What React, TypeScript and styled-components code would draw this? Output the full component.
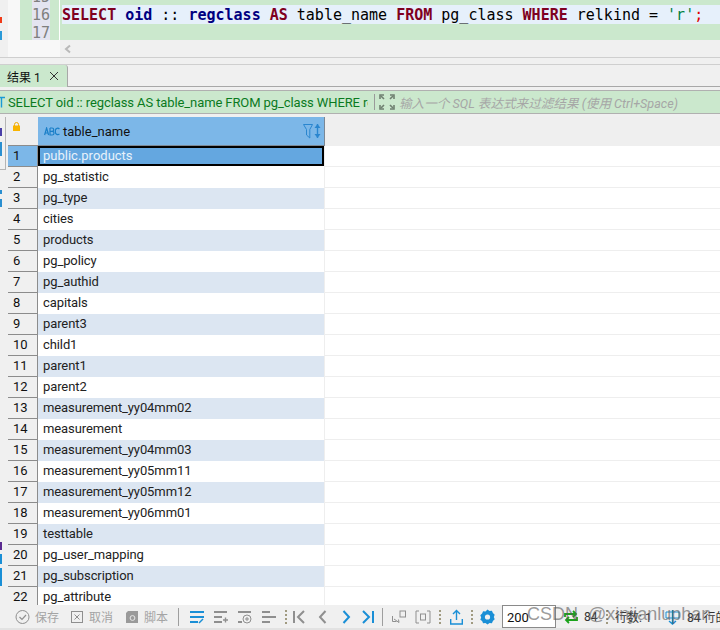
import React from "react";
import styled, {createGlobalStyle} from "styled-components";

const UI_FONT = `Roboto, "Noto Sans CJK SC", sans-serif`;

const GlobalStyle = createGlobalStyle`
  html, body {
    margin: 0;
    padding: 0;
    background: #fff;
  }
  * {
    box-sizing: border-box;
  }
`;

const Page = styled.div`
  position: relative;
  width: 720px;
  height: 630px;
  overflow: hidden;
  display: flex;
  flex-direction: column;
  background: #f0f0f0;
  font-family: ${UI_FONT};
`;

const EditorRow = styled.div`
  display: flex;
  height: 40px;
  flex-shrink: 0;
`;

const SideStrip = styled.div`
  width: 8px;
  flex-shrink: 0;
  display: flex;
  flex-direction: column;
  padding-top: 17px;
  gap: 8px;
  background: #f0f0f0;
`;

const SideMark = styled.div<{$color: string, $h: number, $mt?: number}>`
  width: 2px;
  flex-shrink: 0;
  height: ${props => props.$h}px;
  margin-top: ${props => props.$mt ?? 0}px;
  background: ${props => props.$color};
`;

const SideGap = styled.div`
  width: 12px;
  flex-shrink: 0;
  background: #f8f8f8;
`;

const GreenGutter = styled.div<{$w: number}>`
  width: ${props => props.$w}px;
  flex-shrink: 0;
  background: #cbe8cd;
`;

const LineNumbers = styled.div`
  width: 18px;
  flex-shrink: 0;
  background: #e4e4f0;
  font: 15px/19px "DejaVu Sans Mono", monospace;
  color: #7f7f7f;
  text-align: right;
  overflow: hidden;
`;

const LineNo = styled.div`
  height: 19px;
  width: 17px;
  margin-top: -1px;
  &:first-child {
    margin-top: -12px;
  }
`;

const CodeArea = styled.div`
  flex: 1;
  min-width: 0;
  border-left: 1px solid #fff;
  background: #cbe8cd;
  padding: 5px 0 0 2px;
`;

const CodeLine = styled.div`
  height: 19px;
  background: #e6f0fb;
  font: 15px/20px "DejaVu Sans Mono", monospace;
  color: #000;
  white-space: pre;
`;

const Kw = styled.span`
  font-weight: 700;
  color: #7f0020;
`;

const Ident = styled.span`
  font-weight: 700;
  color: #000080;
`;

const Str = styled.span`
  color: #008040;
`;

const Semi = styled.span`
  color: #e00000;
`;

const ScrollRow = styled.div`
  height: 18px;
  flex-shrink: 0;
  border-bottom: 1px solid #cfcfcf;
  background: #f0f0f0;
  display: flex;
  align-items: center;
  padding-left: 8px;
`;

const ScrollCorner = styled.div`
  width: 52px;
  height: 100%;
  margin-right: 4px;
  background: #f8f8f8;
`;

const TabBar = styled.div`
  height: 23px;
  flex-shrink: 0;
  margin-top: 6px;
  border-top: 1px solid #cfcfcf;
  border-bottom: 1px solid #a8a8a8;
  display: flex;
`;

const Tab = styled.div`
  width: 68px;
  height: 22px;
  background: #cbe8cd;
  border-right: 1px solid #a8a8a8;
  border-top-right-radius: 3px;
  display: flex;
  align-items: center;
  gap: 8px;
  padding-left: 7px;
  font-size: 12px;
  color: #111;
`;

const SqlBar = styled.div`
  height: 24px;
  flex-shrink: 0;
  margin-top: 3px;
  border-top: 1px solid #b0b0b0;
  border-bottom: 1px solid #b0b0b0;
  background: #cbe8cd;
  display: flex;
  align-items: center;
  white-space: nowrap;
  overflow: hidden;
`;

const SqlIcon = styled.div`
  width: 8px;
  flex-shrink: 0;
  overflow: hidden;
  display: flex;
`;

const SqlQuery = styled.div`
  width: 360px;
  flex-shrink: 0;
  overflow: hidden;
  font-size: 13px;
  letter-spacing: -0.1px;
  color: #0a7a1e;
`;

const SqlDivider = styled.div`
  width: 1px;
  height: 16px;
  margin: 0 4px 0 6px;
  background: #9a9a9a;
  flex-shrink: 0;
`;

const FilterHint = styled.div`
  margin-left: 4px;
  font-size: 12.6px;
  font-style: italic;
  color: #a6a6a6;
`;

const GridWrap = styled.div`
  flex: 1;
  min-height: 0;
  display: flex;
  margin-top: 3px;
  overflow: hidden;
`;

const GridStrip = styled.div`
  width: 8px;
  flex-shrink: 0;
  display: flex;
  flex-direction: column;
  background: #f0f0f0;
`;

const StripPanel = styled.div`
  width: 6px;
  height: 53px;
  flex-shrink: 0;
  border-right: 1px solid #b4b4b4;
  border-bottom: 1px solid #b4b4b4;
  padding-top: 11px;
  display: flex;
  flex-direction: column;
  gap: 6px;
`;

const Grid = styled.div`
  flex: 1;
  min-width: 0;
  background: #fff;
  overflow: hidden;
`;

const HeaderRow = styled.div`
  display: flex;
  height: 29px;
  background: #efefef;
`;

const LockCell = styled.div`
  width: 30px;
  flex-shrink: 0;
  border-bottom: 1px solid #8c8c8c;
  padding: 5px 0 0 5px;
  svg {
    display: block;
  }
`;

const HeaderCell = styled.div`
  width: 287px;
  flex-shrink: 0;
  background: #7cb7e8;
  border-right: 1px solid #7c8894;
  border-bottom: 1px solid #7c8894;
  display: flex;
  align-items: center;
  padding: 0 2px 0 6px;
  font-size: 13px;
  color: #111;
`;

const HeaderName = styled.span`
  margin-left: 3px;
  flex: 1;
`;

const Row = styled.div`
  display: flex;
  height: 21px;
`;

const RowNo = styled.div<{$active?: boolean}>`
  width: 30px;
  flex-shrink: 0;
  background: ${props => props.$active ? "#7cb7e8" : "#f0f0f0"};
  border-bottom: 1px solid #8c8c8c;
  border-right: 1px solid #8c8c8c;
  padding-left: 5px;
  font-size: 13px;
  line-height: 19px;
  color: #111;
`;

const Cell = styled.div<{$alt?: boolean, $active?: boolean}>`
  width: 286px;
  flex-shrink: 0;
  padding-left: 5px;
  font-size: 13px;
  line-height: 19px;
  letter-spacing: -0.1px;
  color: #222;
  background: ${props => props.$active ? "#64a7e0" : props.$alt ? "#dce6f2" : "#fff"};
  ${props => props.$active ? `
    border: 2px solid #000;
    padding-left: 3px;
    line-height: 15px;
    height: 20px;
    letter-spacing: 0;
    color: #e8f2fb;
  ` : ""}
`;

const Filler = styled.div`
  flex: 1;
  border-bottom: 1px solid #eeeeee;
  background: #fff;
`;

const CellEdge = styled.div`
  width: 1px;
  flex-shrink: 0;
  background: #eeeeee;
`;

const Toolbar = styled.div`
  height: 25px;
  flex-shrink: 0;
  background: #f0f0f0;
  border-bottom: 2px solid #e2e2e2;
  display: flex;
  align-items: center;
  padding-left: 15px;
  font-size: 12px;
  white-space: nowrap;
  overflow: hidden;
  position: relative;
`;

const ToolLabel = styled.span<{$ml: number}>`
  color: #a4a4a4;
  margin-left: ${props => props.$ml}px;
  width: 24px;
  flex-shrink: 0;
`;

const ToolSep = styled.div<{$ml: number}>`
  width: 1px;
  height: 18px;
  flex-shrink: 0;
  background: #9e9e9e;
  margin-left: ${props => props.$ml}px;
`;

const IconSlot = styled.div<{$ml?: number}>`
  flex-shrink: 0;
  margin-left: ${props => props.$ml ?? 0}px;
  display: flex;
  align-items: center;
`;

const Dots = styled.div<{$ml: number}>`
  width: 2px;
  height: 14px;
  flex-shrink: 0;
  background: repeating-linear-gradient(to bottom, #a09a80 0 2px, transparent 2px 4px);
  margin-left: ${props => props.$ml}px;
`;

const FetchInput = styled.div`
  width: 54px;
  height: 23px;
  flex-shrink: 0;
  margin-left: 7px;
  background: #fff;
  border: 1px solid #8a8a8a;
  font-size: 13px;
  line-height: 23px;
  padding-left: 4px;
  color: #111;
`;

const StatusText = styled.span<{$ml: number, $w: number}>`
  flex-shrink: 0;
  width: ${props => props.$w}px;
  margin-left: ${props => props.$ml}px;
  font-size: 12px;
  color: #333;
`;

const Watermark = styled.div`
  position: absolute;
  left: 527px;
  top: 604px;
  font: 18px/20px "Liberation Sans", sans-serif;
  color: rgba(90, 90, 90, 0.62);
  white-space: pre;
`;

const rows = [
    "public.products", "pg_statistic", "pg_type", "cities", "products", "pg_policy",
    "pg_authid", "capitals", "parent3", "child1", "parent1", "parent2",
    "measurement_yy04mm02", "measurement", "measurement_yy04mm03", "measurement_yy05mm11",
    "measurement_yy05mm12", "measurement_yy06mm01", "testtable", "pg_user_mapping",
    "pg_subscription", "pg_attribute",
];

const GREY = "#8f8f8f";
const BLUE = "#1a8fd6";

const Svg: React.FC<{w: number, h?: number, children: React.ReactNode}> = ({w, h = 16, children}) => (
    <svg width={w} height={h} viewBox={`0 0 ${w} ${h}`} fill="none">{children}</svg>
);

const lines = (rowsY: number[], x2: number[], color: string) => (
    <>
        {rowsY.map((y, i) => <path key={y} d={`M1 ${y}H${x2[i]}`} stroke={color} strokeWidth="2"/>)}
    </>
);

const App: React.FC = () => (
    <Page>
        <GlobalStyle/>
        <EditorRow>
            <SideStrip>
                <SideMark $color="#f03a17" $h={6}/>
                <SideMark $color="#2a9ad8" $h={9}/>
            </SideStrip>
            <SideGap/>
            <GreenGutter $w={12}/>
            <LineNumbers>
                <LineNo>15</LineNo>
                <LineNo>16</LineNo>
                <LineNo>17</LineNo>
            </LineNumbers>
            <GreenGutter $w={9}/>
            <CodeArea>
                <CodeLine>
                    <Kw>SELECT</Kw> <Ident>oid</Ident> :: <Ident>regclass</Ident> <Kw>AS</Kw> table_name <Kw>FROM</Kw> pg_class <Kw>WHERE</Kw> relkind = <Str>'r'</Str><Semi>;</Semi>
                </CodeLine>
            </CodeArea>
        </EditorRow>
        <ScrollRow>
            <ScrollCorner/>
            <svg width="8" height="10" viewBox="0 0 8 10" fill="none">
                <path d="M6 1.5L2 5l4 3.5" stroke="#b9b9b9" strokeWidth="2"/>
            </svg>
        </ScrollRow>
        <TabBar>
            <Tab>
                结果 1
                <svg width="10" height="10" viewBox="0 0 10 10" fill="none">
                    <path d="M1 1l8 8M9 1L1 9" stroke="#333" strokeWidth="1"/>
                </svg>
            </Tab>
        </TabBar>
        <SqlBar>
            <SqlIcon>
                <svg width="5" height="12" viewBox="0 0 5 12" fill="none">
                    <path d="M-2 1.5H5M1.5 1.5V11.5" stroke="#1a9ad6" strokeWidth="1.4"/>
                </svg>
            </SqlIcon>
            <SqlQuery>
                SELECT oid :: regclass AS table_name FROM pg_class WHERE relkind
            </SqlQuery>
            <SqlDivider/>
            <svg width="16" height="16" viewBox="0 0 16 16" fill="none">
                <path d="M1 5V1h4M11 1h4v4M1 11v4h4M15 11v4h-4" stroke="#6f7f70" strokeWidth="1.6"/>
                <path d="M2 2l3 3M14 2l-3 3M2 14l3-3M14 14l-3-3" stroke="#6f7f70" strokeWidth="1.6"/>
            </svg>
            <FilterHint>输入一个 SQL 表达式来过滤结果 (使用 Ctrl+Space)</FilterHint>
        </SqlBar>
        <GridWrap>
            <GridStrip>
                <StripPanel>
                    <SideMark $color="#4a3fa8" $h={8}/>
                    <SideMark $color="#2a8fd0" $h={14}/>
                </StripPanel>
                <SideMark $color="#2a8fd0" $mt={20} $h={4}/>
                <SideMark $color="#2a8fd0" $mt={5} $h={8}/>
                <SideMark $color="#5a2a90" $mt={335} $h={8}/>
                <SideMark $color="#1a8fd6" $mt={4} $h={10}/>
                <SideMark $color="#1a8fd6" $mt={4} $h={18}/>
            </GridStrip>
            <Grid>
                <HeaderRow>
                    <LockCell>
                        <svg width="7" height="9" viewBox="0 0 7 9">
                            <path d="M1.5 4V2.5a2 2 0 0 1 4 0V4" stroke="#f0a800" fill="none"/>
                            <rect x="0" y="3.5" width="7" height="5.5" fill="#f8b400"/>
                        </svg>
                    </LockCell>
                    <HeaderCell>
                        <svg width="16" height="9" viewBox="0 0 16 9" fill="none" stroke="#1a7fc8" strokeWidth="1.2">
                            <path d="M.6 8L2.6 1l2 7M1.2 6h3"/>
                            <path d="M6 1v7h2.2a1.6 1.6 0 0 0 0-3.6H6M6 4.4h2a1.6 1.6 0 0 0 0-3.4H6"/>
                            <path d="M15.4 2a2.3 2.3 0 0 0-4 1.2v2a2.3 2.3 0 0 0 4 1.6"/>
                        </svg>
                        <HeaderName>table_name</HeaderName>
                        <svg width="19" height="17" viewBox="0 0 19 17" fill="none">
                            <path d="M.5 1.5h9L6.8 6.5v8.5L3.5 12V6.5z" stroke="#2a86cf"/>
                            <path d="M14.5 1v14" stroke="#2a86cf" strokeWidth="1.4"/>
                            <path d="M11.5 5l3-4 3 4zM11.5 11l3 4 3-4z" fill="#2a86cf"/>
                        </svg>
                    </HeaderCell>
                </HeaderRow>
                {rows.map((name, i) => (
                    <Row key={name}>
                        <RowNo $active={i === 0}>{i + 1}</RowNo>
                        <Cell $alt={i % 2 === 0} $active={i === 0}>{name}</Cell>
                        <CellEdge/>
                        <Filler/>
                    </Row>
                ))}
            </Grid>
        </GridWrap>
        <Toolbar>
            <IconSlot>
                <Svg w={15}>
                    <circle cx="7.5" cy="8" r="6.5" stroke={GREY}/>
                    <path d="M4.5 8l2.5 2.5 4-4.5" stroke={GREY} strokeWidth="1.2"/>
                </Svg>
            </IconSlot>
            <ToolLabel $ml={5}>保存</ToolLabel>
            <IconSlot $ml={12}>
                <Svg w={12} h={12}>
                    <rect x=".5" y=".5" width="11" height="11" stroke={GREY}/>
                    <path d="M3.5 3.5l5 5M8.5 3.5l-5 5" stroke={GREY}/>
                </Svg>
            </IconSlot>
            <ToolLabel $ml={6}>取消</ToolLabel>
            <IconSlot $ml={13}>
                <Svg w={13}>
                    <path d="M2 2h10v12H0V4z" fill="#9a9a9a"/>
                    <circle cx="6.5" cy="9" r="2.4" stroke="#e8e8e8"/>
                </Svg>
            </IconSlot>
            <ToolLabel $ml={5}>脚本</ToolLabel>
            <ToolSep $ml={10}/>
            <IconSlot $ml={10}>
                <Svg w={15}>
                    {lines([3, 8, 13], [15, 15, 9], BLUE)}
                    <path d="M10 14l4-4" stroke={BLUE} strokeWidth="1.5"/>
                </Svg>
            </IconSlot>
            <IconSlot $ml={9}>
                <Svg w={15}>
                    {lines([3, 8, 13], [14, 9, 9], GREY)}
                    <path d="M10 11h5M12.5 8.5v5" stroke={GREY} strokeWidth="1.4"/>
                </Svg>
            </IconSlot>
            <IconSlot $ml={9}>
                <Svg w={15}>
                    {lines([3, 13], [14, 5], GREY)}
                    <circle cx="10" cy="10" r="4" stroke={GREY}/>
                    <path d="M8 10h4M10 8v4" stroke={GREY}/>
                </Svg>
            </IconSlot>
            <IconSlot $ml={9}>
                <Svg w={15}>
                    {lines([3, 8, 13], [9, 15, 9], GREY)}
                </Svg>
            </IconSlot>
            <Dots $ml={9}/>
            <IconSlot $ml={6}>
                <Svg w={12}>
                    <path d="M1 2v12" stroke={GREY} strokeWidth="2"/>
                    <path d="M11 2L5 8l6 6" stroke={GREY} strokeWidth="2"/>
                </Svg>
            </IconSlot>
            <IconSlot $ml={13}>
                <Svg w={9}>
                    <path d="M7.5 2L2 8l5.5 6" stroke={GREY} strokeWidth="2"/>
                </Svg>
            </IconSlot>
            <IconSlot $ml={15}>
                <Svg w={9}>
                    <path d="M1.5 2L7 8l-5.5 6" stroke={BLUE} strokeWidth="2"/>
                </Svg>
            </IconSlot>
            <IconSlot $ml={11}>
                <Svg w={12}>
                    <path d="M1 2l6 6-6 6" stroke={BLUE} strokeWidth="2"/>
                    <path d="M11 2v12" stroke={BLUE} strokeWidth="2"/>
                </Svg>
            </IconSlot>
            <ToolSep $ml={8}/>
            <IconSlot $ml={9}>
                <Svg w={14}>
                    <path d="M.5 7v5.5h4M2 10l5 3.5-.5-3" stroke={GREY}/>
                    <rect x="8" y="2" width="5.5" height="6" stroke={GREY}/>
                </Svg>
            </IconSlot>
            <IconSlot $ml={9}>
                <Svg w={16}>
                    <path d="M4 2H1v12h3M12 2h3v12h-3" stroke={GREY}/>
                    <rect x="5.5" y="5" width="5" height="6" stroke={GREY}/>
                </Svg>
            </IconSlot>
            <Dots $ml={8}/>
            <IconSlot $ml={9}>
                <Svg w={13}>
                    <path d="M6.5 11V2M3 5l3.5-3.5L10 5" stroke={BLUE} strokeWidth="1.4"/>
                    <path d="M.7 10v5h11.6v-5" stroke={BLUE} strokeWidth="1.4"/>
                </Svg>
            </IconSlot>
            <Dots $ml={8}/>
            <IconSlot $ml={7}>
                <Svg w={15}>
                    <path d="M7.5 .5l2 1.5 2.4-.3 1 2.4 1.8 1.6-.9 2.3.9 2.3-1.8 1.6-1 2.4-2.4-.3-2 1.5-2-1.5-2.4.3-1-2.4L.3 10.8l.9-2.3-.9-2.3 1.8-1.6 1-2.4 2.4.3z" fill={BLUE}/>
                    <circle cx="7.5" cy="8" r="2.6" fill="#f0f0f0"/>
                </Svg>
            </IconSlot>
            <FetchInput>200</FetchInput>
            <IconSlot $ml={7}>
                <Svg w={16}>
                    <path d="M2 8V5h10M10 2l3 3-3 3" stroke="#1aa31a" strokeWidth="1.8"/>
                    <path d="M14 8v3H4M6 14l-3-3 3-3" stroke="#1aa31a" strokeWidth="1.8"/>
                </Svg>
            </IconSlot>
            <StatusText $ml={5} $w={14}>84</StatusText>
            <Dots $ml={8}/>
            <StatusText $ml={7} $w={33}>行数: 1</StatusText>
            <IconSlot $ml={17}>
                <Svg w={15}>
                    <path d="M7.5 1v14M4 12l3.5 3 3.5-3" stroke={BLUE} strokeWidth="1.4"/>
                    <path d="M1 3h13v6H1z" stroke={BLUE}/>
                </Svg>
            </IconSlot>
            <StatusText $ml={7} $w={40}>84 行的</StatusText>
        </Toolbar>
        <Watermark>CSDN  @xinjianluphan</Watermark>
    </Page>
);

export default App;
